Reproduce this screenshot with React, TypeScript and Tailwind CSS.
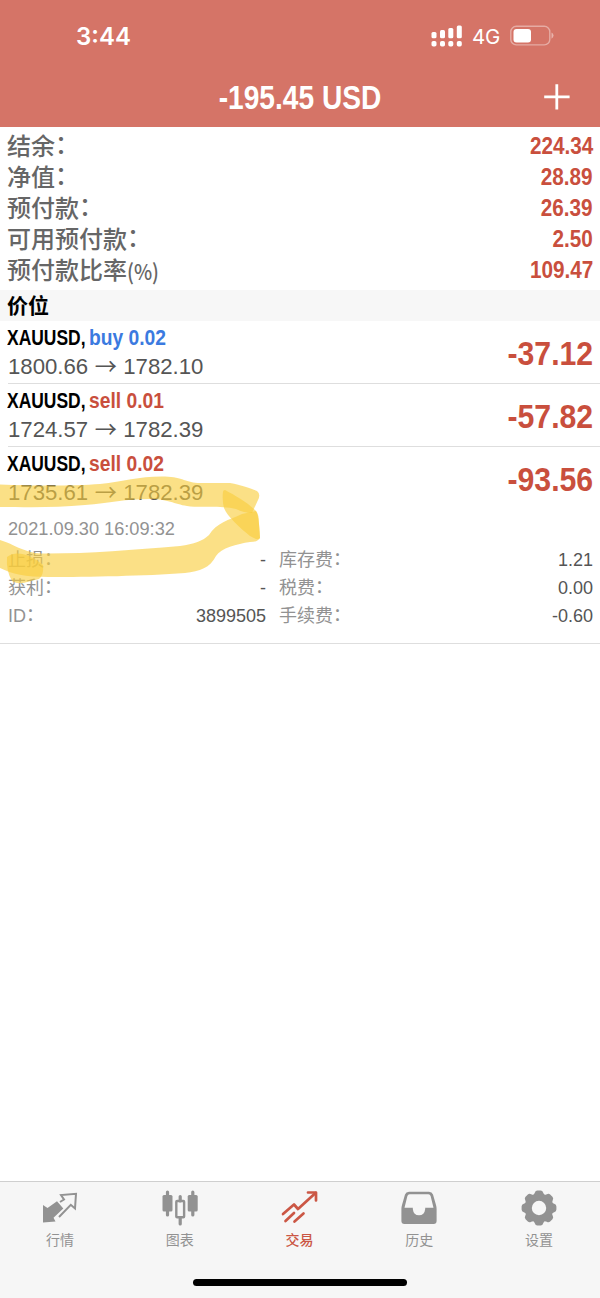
const summary = [
  { label: "结余", suffix: "：", value: "224.34" },
  { label: "净值", suffix: "：", value: "28.89" },
  { label: "预付款", suffix: "：", value: "26.39" },
  { label: "可用预付款", suffix: "：", value: "2.50" },
  { label: "预付款比率", suffix: "(%)", value: "109.47" },
];

const positions = [
  { side: "buy", volume: "0.02", open: "1800.66", current: "1782.10", profit: "-37.12" },
  { side: "sell", volume: "0.01", open: "1724.57", current: "1782.39", profit: "-57.82" },
  { side: "sell", volume: "0.02", open: "1735.61", current: "1782.39", profit: "-93.56" },
];

const details = [
  { left: "止损", leftValue: "-", right: "库存费", rightValue: "1.21" },
  { left: "获利", leftValue: "-", right: "税费", rightValue: "0.00" },
  { left: "ID", leftValue: "3899505", right: "手续费", rightValue: "-0.60" },
];

function QuotesIcon() {
  return (
    <svg width="36" height="32" viewBox="0 0 36 32" fill="none">
      <path d="M1 13 L5.5 16 L15 9.3 L21.3 16.5 L11.5 25.8 L13.5 29.5 L1 30.5 Z" fill="#929292" />
      <path
        d="M18 10 L22 7.5 L19 3 L34 1.8 L33 16.5 L28.8 12.8 L17 25"
        stroke="#929292"
        strokeWidth="2"
      />
    </svg>
  );
}

function ChartIcon() {
  return (
    <svg width="36" height="36" viewBox="0 0 36 36" fill="none">
      <path
        d="M5.5 2V25M30.8 2V25M18.2 6.5V11M18.2 28V34"
        stroke="#929292"
        strokeWidth="3.2"
        strokeLinecap="round"
      />
      <rect x="0.5" y="5" width="10" height="16.5" rx="1.5" fill="#929292" />
      <rect x="25.7" y="5" width="10" height="16.5" rx="1.5" fill="#929292" />
      <rect x="14.3" y="11" width="7.8" height="16.3" rx="0.8" stroke="#929292" strokeWidth="2.4" />
    </svg>
  );
}

function TradeIcon() {
  return (
    <svg width="38" height="36" viewBox="0 0 38 36" fill="none" stroke="#cb5745" strokeWidth="2.7">
      <path d="M3 24 L14 14.5 L18 19 L35.5 3" strokeLinejoin="round" strokeLinecap="round" />
      <path d="M28 2.5H36V10.5" strokeLinejoin="round" strokeLinecap="round" />
      <path d="M5.5 31 L14 23M14.5 31.5 L23.5 23.5" strokeLinecap="round" />
    </svg>
  );
}

function HistoryIcon() {
  return (
    <svg width="36" height="34" viewBox="0 0 36 34">
      <path
        fill="#929292"
        fillRule="evenodd"
        d="M8 0.8H28Q31 0.8 32 3.5L35 14Q35.6 16 35.6 18V30Q35.6 33 32.6 33H3.4Q0.4 33 0.4 30V18Q0.4 16 1 14L4 3.5Q5 0.8 8 0.8ZM8.6 3.3Q6.9 3.3 6.4 5L3.5 16.8H11.8V18Q12.5 24.3 18 24.3Q23.5 24.3 24.2 18V16.8H32.5L29.6 5Q29.1 3.3 27.4 3.3Z"
      />
    </svg>
  );
}

function SettingsIcon() {
  return (
    <svg width="36" height="36" viewBox="-18 -18 36 36">
      <g fill="#929292">
        {[0, 45, 90, 135, 180, 225, 270, 315].map((angle) => (
          <path
            key={angle}
            d="M-7.5 -12 Q-4.8 -13 -4.2 -15.2 Q-3.6 -17.4 -1.6 -17.4 H1.6 Q3.6 -17.4 4.2 -15.2 Q4.8 -13 7.5 -12 Z"
            transform={`rotate(${angle})`}
          />
        ))}
      </g>
      <circle r="10.7" stroke="#929292" strokeWidth="7" fill="none" />
    </svg>
  );
}

const tabs = [
  { name: "行情", icon: <QuotesIcon /> },
  { name: "图表", icon: <ChartIcon /> },
  { name: "交易", icon: <TradeIcon />, active: true },
  { name: "历史", icon: <HistoryIcon /> },
  { name: "设置", icon: <SettingsIcon /> },
];

function StatusBar() {
  return (
    <div className="h-[66px] pt-[6px] pl-[76px] pr-[46px] flex items-center justify-between text-white font-['Inter',sans-serif]">
      <span className="mt-[2px] text-[24px] leading-[30px] font-semibold">3:44</span>
      <div className="flex items-center">
        <svg width="32" height="22" viewBox="0 0 32 22" fill="white" className="mr-[9px]">
          <rect x="0.5" y="7" width="5" height="6.2" rx="1.5" />
          <rect x="9" y="5" width="5" height="8.2" rx="1.5" />
          <rect x="17.3" y="3" width="5" height="10.2" rx="1.5" />
          <rect x="25.8" y="0.5" width="5" height="12.7" rx="1.5" />
          <rect x="0.5" y="16" width="5" height="5.5" rx="1.8" />
          <rect x="9" y="16" width="5" height="5.5" rx="1.8" />
          <rect x="17.3" y="16" width="5" height="5.5" rx="1.8" />
          <rect x="25.8" y="16" width="5" height="5.5" rx="1.8" />
        </svg>
        <span className="mt-[2px] text-[20.5px] leading-6 mr-[10px] w-[28px] tracking-[-0.3px]">4G</span>
        <svg width="44" height="22" viewBox="0 0 44 22" fill="none">
          <rect x="0.8" y="1.3" width="39" height="18.6" rx="5.5" stroke="white" strokeOpacity="0.4" strokeWidth="1.4" />
          <rect x="3.5" y="4" width="17.5" height="13.5" rx="3" fill="white" />
          <path d="M41.5 7.5Q43.5 8.5 43.5 10.6Q43.5 12.7 41.5 13.7Z" fill="white" fillOpacity="0.45" />
        </svg>
      </div>
    </div>
  );
}

// marker strokes drawn by hand over the last position
function Highlighter() {
  return (
    <svg
      className="absolute left-0 top-[470px] pointer-events-none"
      width="270"
      height="120"
      viewBox="0 470 270 120"
      fill="#f8cd3b"
      fillOpacity="0.62"
    >
      <path d="M0 484.5C35 486 75 486 100 484C125 481 140 476 165 476.5C183 477 186 483 200 483H230C242 485 252 489 257 491Q261 494 258 500L252 513Q244 513 236 509C220 505 200 508 187 506C174 504 168 499 150 499C125 499 110 503 85 505C55 508 25 507 0 507Z" />
      <path d="M225 490C236 496 247 502 256 511Q259 514 259 524L260 538Q258 541 250 536C240 528 227 516 224 508Q222 500 223 492Q223 490 225 490Z" />
      <path d="M0 540C14 544 22 552 40 553.5C85 554 130 550 180 546C194 544 203 541 209 535C216 523 229 520 242 514L256 511Q259 516 260 538Q258 542 250 542C237 544 221 548 216 556C210 568 200 571 185 573C145 576 90 577 48 577C25 577 12 574 0 568Z" />
      <path d="M7 557C16 550 30 554 43 565Q44 575 39 579C29 581 20 586 12 581Q6 571 7 557Z" />
    </svg>
  );
}

export default function App() {
  return (
    <div className="relative w-[600px] h-[1298px] flex flex-col overflow-hidden bg-white font-['Liberation_Sans','Noto_Sans_CJK_SC',sans-serif]">
      <header className="h-[127px] shrink-0 bg-[#d57467]">
        <StatusBar />
        <div className="h-[61px] grid grid-cols-[60px_1fr_60px] items-center text-white">
          <span />
          <h1 className="mt-[2px] text-center text-[33.5px] leading-none font-bold whitespace-nowrap scale-x-[0.84]">
            -195.45 USD
          </h1>
          <svg width="26" height="26" viewBox="0 0 26 26" stroke="white" strokeWidth="2.8" className="ml-[4px]">
            <path d="M0.2 12.8H25.6M12.8 0.2V25.6" />
          </svg>
        </div>
      </header>

      <main className="flex-1">
        <section className="h-[163px] pt-[4px] pl-[7px] pr-[7px]">
          {summary.map((row) => (
            <div key={row.value} className="h-[31px] flex items-center justify-between">
              <span className="flex items-center text-[24px] leading-[31px] font-medium text-[#666]">
                {row.label}
                {row.suffix === "(%)" ? (
                  <span className="text-[22px] leading-[31px] origin-left scale-x-[0.88] font-['Noto_Sans_CJK_SC',sans-serif]">
                    {row.suffix}
                  </span>
                ) : (
                  <span className="-translate-y-[2px]">{row.suffix}</span>
                )}
              </span>
              <span className="text-[23px] font-bold text-[#c94f3d] origin-right scale-x-[0.9]">
                {row.value}
              </span>
            </div>
          ))}
        </section>

        <h2 className="h-[31px] pl-[7px] bg-[#f7f7f7] text-[21px] leading-[31px] font-bold text-black">
          价位
        </h2>

        {positions.map((p, i) => (
          <div key={p.open} className="h-[63px] pl-[8px]">
            <div
              className={`h-full pr-[7px] flex items-center justify-between ${
                i < 2 ? "border-b border-[#dedede]" : ""
              }`}
            >
              <div>
                <div className="h-[30px] flex items-center text-[22.5px] leading-[30px] font-bold whitespace-nowrap">
                  <span className="w-[81px] -ml-px mr-px">
                    <span className="inline-block origin-left scale-x-[0.775] text-black">XAUUSD,</span>
                  </span>
                  <span
                    className={`origin-left scale-x-[0.855] ${
                      p.side === "buy" ? "text-[#3b7ae0]" : "text-[#c94f3d]"
                    }`}
                  >
                    {p.side} {p.volume}
                  </span>
                </div>
                <div className="h-[29px] -mt-px mb-px flex items-center gap-[6.5px] text-[22.2px] leading-[29px] text-[#555]">
                  <span>{p.open}</span>
                  <span className="w-[22px] -mt-[2px] text-center leading-[29px] font-['Noto_Sans_CJK_SC',sans-serif]">
                    →
                  </span>
                  <span>{p.current}</span>
                </div>
              </div>
              <span className="mt-[4px] text-[32.5px] leading-none font-bold text-[#c94f3d] origin-right scale-x-[0.93]">
                {p.profit}
              </span>
            </div>
          </div>
        ))}

        <section className="h-[134px] pl-[8px] pr-[7px] pt-[3px] border-b border-[#dedede] text-[18px]">
          <p className="h-[33px] leading-[32px] text-[18.2px] text-[#929292]">2021.09.30 16:09:32</p>
          {details.map((d) => (
            <div key={d.left} className="h-[28px] grid grid-cols-[258px_1fr] gap-[13px] leading-[28px]">
              <div className="flex justify-between">
                <span className="flex text-[#929292]">
                  {d.left}
                  <span className="-translate-y-[1px]">：</span>
                </span>
                <span className="text-[#555]">{d.leftValue}</span>
              </div>
              <div className="flex justify-between">
                <span className="flex text-[#929292]">
                  {d.right}
                  <span className="-translate-y-[1px]">：</span>
                </span>
                <span className="text-[#555]">{d.rightValue}</span>
              </div>
            </div>
          ))}
        </section>
      </main>

      <Highlighter />

      <footer className="h-[117px] shrink-0 flex flex-col items-center border-t border-[#cfcfcf] bg-[#f6f6f6]">
        <nav className="w-full grid grid-cols-5 pt-[8px] pr-px">
          {tabs.map((tab) => (
            <div key={tab.name} className="flex flex-col items-center">
              <div className="h-[36px] flex items-center justify-center">{tab.icon}</div>
              <span
                className={`mt-[3px] mb-px text-[14px] leading-5 font-['Noto_Sans_CJK_SC',sans-serif] ${
                  tab.active ? "text-[#cb5745] font-medium" : "text-[#929292]"
                }`}
              >
                {tab.name}
              </span>
            </div>
          ))}
        </nav>
        <div className="mt-[29px] w-[214px] h-[7px] shrink-0 rounded-full bg-black" />
      </footer>
    </div>
  );
}
